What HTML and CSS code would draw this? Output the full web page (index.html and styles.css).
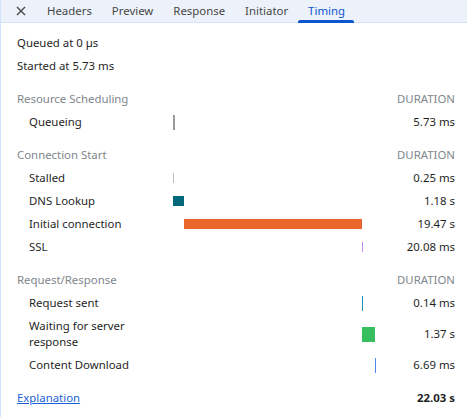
FILE: index.html
```html
<!DOCTYPE html>
<html>
<head>
<meta charset="utf-8">
<link rel="stylesheet" href="styles.css">
</head>
<body>
<div class="panel">
  <div class="tabbar">
    <div class="close">
      <svg width="10" height="10" viewBox="0 0 10 10"><path d="M1 1L9 9M9 1L1 9" stroke="#474747" stroke-width="1.4" fill="none"/></svg>
    </div>
    <div class="tab">Headers</div>
    <div class="tab">Preview</div>
    <div class="tab">Response</div>
    <div class="tab">Initiator</div>
    <div class="tab active">Timing</div>
  </div>
  <div class="content">
    <div class="row top"><div class="full">Queued at 0 µs</div></div>
    <div class="row top"><div class="full">Started at 5.73 ms</div></div>

    <div class="row head"><div class="hlabel">Resource Scheduling</div><div class="cell"></div><div class="dur hd">DURATION</div></div>
    <div class="row"><div class="label">Queueing</div><div class="cell"><span class="bar queue" style="margin-left:0;width:2px"></span></div><div class="dur">5.73 ms</div></div>

    <div class="row head"><div class="hlabel">Connection Start</div><div class="cell"></div><div class="dur hd">DURATION</div></div>
    <div class="row"><div class="label">Stalled</div><div class="cell"><span class="bar stalled" style="margin-left:0;width:1px"></span></div><div class="dur">0.25 ms</div></div>
    <div class="row"><div class="label">DNS Lookup</div><div class="cell"><span class="bar dns" style="margin-left:0;width:11px"></span></div><div class="dur">1.18 s</div></div>
    <div class="row"><div class="label">Initial connection</div><div class="cell"><span class="bar conn" style="margin-left:11px;width:178px"></span></div><div class="dur">19.47 s</div></div>
    <div class="row"><div class="label">SSL</div><div class="cell"><span class="bar ssl" style="margin-left:189px;width:1px"></span></div><div class="dur">20.08 ms</div></div>

    <div class="row head"><div class="hlabel">Request/Response</div><div class="cell"></div><div class="dur hd">DURATION</div></div>
    <div class="row"><div class="label">Request sent</div><div class="cell"><span class="bar tall sent" style="margin-left:189px;width:1px"></span></div><div class="dur">0.14 ms</div></div>
    <div class="row"><div class="label">Waiting for server<br>response</div><div class="cell"><span class="bar tall wait" style="margin-left:189px;width:13px"></span></div><div class="dur">1.37 s</div></div>
    <div class="row"><div class="label">Content Download</div><div class="cell"><span class="bar tall download" style="margin-left:202px;width:1px"></span></div><div class="dur">6.69 ms</div></div>

    <div class="row head foot"><div class="hlabel"><a class="link" href="#">Explanation</a></div><div class="cell"></div><div class="dur total">22.03 s</div></div>
  </div>
</div>
</body>
</html>
```

FILE: styles.css
```css
html, body {
  margin: 0;
  padding: 0;
  background: #ffffff;
}
body {
  font-family: "Noto Sans", "Open Sans", sans-serif;
  font-size: 11.4px;
  color: #1f1f1f;
}
.panel {
  width: 467px;
  height: 417px;
  box-sizing: border-box;
  border-left: 1px solid #d3e3fd;
  overflow: hidden;
}
.tabbar {
  display: flex;
  height: 22px;
  background: #edf2fa;
  border-bottom: 1px solid #d3e3fd;
  align-items: stretch;
}
.close {
  width: 36px;
  display: flex;
  align-items: center;
  justify-content: center;
  padding-left: 4px;
  box-sizing: border-box;
}
.tab {
  padding: 0 10px;
  display: flex;
  align-items: center;
  color: #474747;
  line-height: 22px;
  position: relative;
}
.tab.active {
  color: #0b57d0;
}
.tab.active::after {
  content: "";
  position: absolute;
  left: 0;
  right: 1px;
  bottom: -1px;
  height: 3px;
  background: #0b57d0;
  border-radius: 2px 2px 0 0;
}
.content {
  padding: 9px 11px 0 16px;
}
.row {
  display: grid;
  grid-template-columns: 156px 207px 75px;
  padding: 3px 0 4px;
  line-height: 16px;
  align-items: center;
}
.row.top {
  grid-template-columns: 1fr;
}
.row.head {
  margin-top: 10px;
}
.hlabel {
  color: #80868b;
}
.hd {
  color: #80868b;
}
.label {
  padding-left: 12px;
}
.cell {
  display: flex;
  align-items: center;
  height: 16px;
}
.dur {
  text-align: right;
}
.bar {
  display: block;
  height: 10px;
  flex: none;
}
.bar.tall {
  height: 15px;
}
.bar.queue {
  height: 15px;
  background: #9a9a9a;
}
.bar.stalled { background: #bdbdbd; }
.bar.dns { background: #00687a; }
.bar.conn { background: #e8672a; }
.bar.ssl { background: #c58af9; }
.bar.sent { background: #1a98bd; }
.bar.wait { background: #37be5f; }
.bar.download { background: #4d87ea; }
.link {
  color: #1a5fd6;
  text-decoration: underline;
}
.total {
  font-weight: bold;
}
```
